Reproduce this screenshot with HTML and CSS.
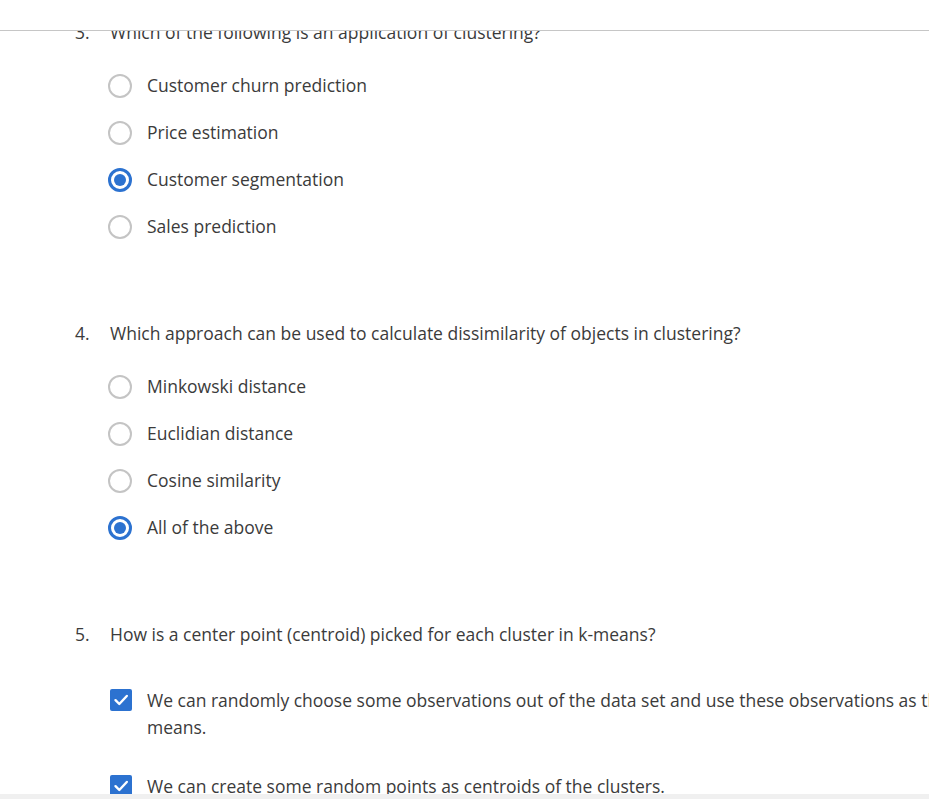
FILE: index.html
```html
<!DOCTYPE html>
<html lang="en">
<head>
<meta charset="utf-8">
<title>Quiz</title>
<link rel="stylesheet" href="styles.css">
</head>
<body>
<div class="page">
  <header class="topbar"></header>
  <main class="viewport">
    <div class="quiz">
      <section class="question">
        <div class="q-row"><span class="q-num">3.</span><span class="q-text">Which of the following is an application of clustering?</span></div>
        <ul class="options radios">
          <li class="option"><span class="radio"></span><span class="opt-text">Customer churn prediction</span></li>
          <li class="option"><span class="radio"></span><span class="opt-text">Price estimation</span></li>
          <li class="option"><span class="radio checked"></span><span class="opt-text">Customer segmentation</span></li>
          <li class="option"><span class="radio"></span><span class="opt-text">Sales prediction</span></li>
        </ul>
      </section>
      <section class="question">
        <div class="q-row"><span class="q-num">4.</span><span class="q-text">Which approach can be used to calculate dissimilarity of objects in clustering?</span></div>
        <ul class="options radios">
          <li class="option"><span class="radio"></span><span class="opt-text">Minkowski distance</span></li>
          <li class="option"><span class="radio"></span><span class="opt-text">Euclidian distance</span></li>
          <li class="option"><span class="radio"></span><span class="opt-text">Cosine similarity</span></li>
          <li class="option"><span class="radio checked"></span><span class="opt-text">All of the above</span></li>
        </ul>
      </section>
      <section class="question">
        <div class="q-row"><span class="q-num">5.</span><span class="q-text">How is a center point (centroid) picked for each cluster in k-means?</span></div>
        <ul class="options checks">
          <li class="option"><span class="checkbox"><svg viewBox="0 0 22 22" width="22" height="22"><path d="M5.5 11.2 L9.3 15 L16.8 7" fill="none" stroke="#fff" stroke-width="2.4" stroke-linecap="round" stroke-linejoin="round"/></svg></span><span class="opt-text">We can randomly choose some observations out of the data set and use these observations as the means.</span></li>
          <li class="option"><span class="checkbox"><svg viewBox="0 0 22 22" width="22" height="22"><path d="M5.5 11.2 L9.3 15 L16.8 7" fill="none" stroke="#fff" stroke-width="2.4" stroke-linecap="round" stroke-linejoin="round"/></svg></span><span class="opt-text">We can create some random points as centroids of the clusters.</span></li>
        </ul>
      </section>
    </div>
  </main>
  <div class="hscroll"></div>
</div>
</body>
</html>
```
FILE: styles.css
```css
* { box-sizing: border-box; }
html, body { margin: 0; padding: 0; background: #fff; }
body {
  font-family: "Open Sans", "Liberation Sans", sans-serif;
  font-size: 17.5px;
  color: #3b3b3b;
}
.page {
  width: 929px;
  height: 799px;
  display: flex;
  flex-direction: column;
  overflow: hidden;
}
.topbar {
  height: 31px;
  flex: none;
  border-bottom: 1px solid #c6c6c6;
  background: #fff;
}
.viewport {
  flex: 1;
  overflow: hidden;
  position: relative;
}
.quiz {
  margin-top: -12px;
  padding-left: 75px;
  width: 1000px;
}
.question {
  margin-bottom: 80px;
}
.q-row {
  display: flex;
  line-height: 27px;
}
.q-num {
  width: 35px;
  flex: none;
}
.options {
  list-style: none;
  margin: 26px 0 0 33px;
  padding: 0;
  display: flex;
  flex-direction: column;
  gap: 20px;
}
.options.checks {
  margin-top: 39px;
  gap: 32px;
}
.option {
  display: flex;
  align-items: flex-start;
  gap: 15px;
  line-height: 27px;
}
.opt-text {
  width: 830px;
}
.radio {
  flex: none;
  width: 24px;
  height: 24px;
  margin-top: 2px;
  border: 2px solid #c4c4c4;
  border-radius: 50%;
  position: relative;
}
.radio.checked {
  border: 3px solid #2c72d0;
}
.radio.checked::after {
  content: "";
  position: absolute;
  left: 3px;
  top: 3px;
  width: 12px;
  height: 12px;
  border-radius: 50%;
  background: #2c72d0;
}
.checkbox {
  flex: none;
  width: 22px;
  height: 22px;
  margin: 2px 2px 0 2px;
  border-radius: 2px;
  background: #2c72d0;
  display: flex;
}
.options.checks .option { gap: 13px; }
.hscroll {
  height: 5px;
  flex: none;
  background: #f0f0f0;
}
```
